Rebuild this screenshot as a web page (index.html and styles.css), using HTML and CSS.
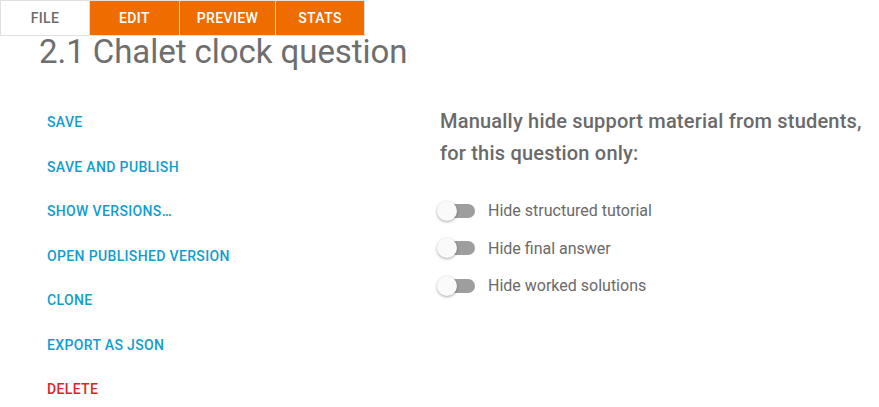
FILE: index.html
```html
<!DOCTYPE html>
<html lang="en">
<head>
<meta charset="utf-8">
<title>2.1 Chalet clock question</title>
<link rel="stylesheet" href="styles.css">
</head>
<body>
<nav class="tabs">
  <a class="tab tab-active">File</a>
  <a class="tab tab-edit">Edit</a>
  <a class="tab tab-preview">Preview</a>
  <a class="tab tab-stats">Stats</a>
</nav>
<h1 class="title">2.1 Chalet clock question</h1>
<main class="content">
  <section class="actions">
    <a class="action">Save</a>
    <a class="action">Save and publish</a>
    <a class="action">Show versions…</a>
    <a class="action">Open published version</a>
    <a class="action">Clone</a>
    <a class="action">Export as JSON</a>
    <a class="action action-danger">Delete</a>
  </section>
  <section class="support">
    <p class="support-heading">Manually hide support material from students, for this question only:</p>
    <div class="toggles">
      <label class="toggle-row"><span class="switch"><span class="track"></span><span class="thumb"></span></span><span class="toggle-label">Hide structured tutorial</span></label>
      <label class="toggle-row"><span class="switch"><span class="track"></span><span class="thumb"></span></span><span class="toggle-label">Hide final answer</span></label>
      <label class="toggle-row"><span class="switch"><span class="track"></span><span class="thumb"></span></span><span class="toggle-label">Hide worked solutions</span></label>
    </div>
  </section>
</main>
</body>
</html>
```
FILE: styles.css
```css
* { box-sizing: border-box; }
body {
  margin: 0;
  font-family: Roboto, "Liberation Sans", sans-serif;
  background: #fff;
  color: #666;
}
.tabs {
  display: flex;
  height: 36px;
}
.tab {
  display: flex;
  align-items: center;
  justify-content: center;
  height: 36px;
  border: 1px solid #e0e0e0;
  font-size: 14px;
  font-weight: 500;
  text-transform: uppercase;
  letter-spacing: 0.4px;
  color: #fff;
  background: #ef6c00;
}
.tab + .tab { margin-left: -1px; }
.tab-active { width: 90px; background: #fff; color: #6a6a6a; }
.tab-edit { width: 91px; }
.tab-preview { width: 97px; }
.tab-stats { width: 90px; }
.title {
  margin: 0 0 0 39px;
  font-size: 33px;
  line-height: 32px;
  font-weight: 400;
  letter-spacing: -0.05px;
  color: #6e6e6e;
}
.content {
  display: flex;
  margin-top: 32px;
}
.actions {
  width: 437px;
  padding-left: 47px;
  display: flex;
  flex-direction: column;
}
.action {
  display: block;
  font-size: 14px;
  font-weight: 500;
  line-height: 44.5px;
  text-transform: uppercase;
  letter-spacing: 0.35px;
  color: #119dd0;
}
.action-danger { color: #d9262b; }
.support {
  flex: 1;
  padding-top: 5px;
}
.support-heading {
  margin: 0 0 0 3px;
  font-size: 20px;
  font-weight: 500;
  line-height: 32px;
  letter-spacing: 0.2px;
  color: #6a6a6a;
}
.toggles {
  margin-top: 23px;
  display: flex;
  flex-direction: column;
}
.toggle-row {
  display: flex;
  align-items: center;
  height: 37.5px;
}
.switch {
  position: relative;
  width: 38px;
  height: 20px;
  flex: none;
}
.track {
  position: absolute;
  left: 4px;
  top: 3px;
  width: 34px;
  height: 14px;
  border-radius: 7px;
  background: #9e9e9e;
}
.thumb {
  position: absolute;
  left: 0;
  top: 0;
  width: 20px;
  height: 20px;
  border-radius: 50%;
  background: #fafafa;
  box-shadow: 0 1px 3px rgba(0,0,0,0.35);
}
.toggle-label {
  margin-left: 13px;
  font-size: 16px;
  color: #6a6a6a;
}
```
